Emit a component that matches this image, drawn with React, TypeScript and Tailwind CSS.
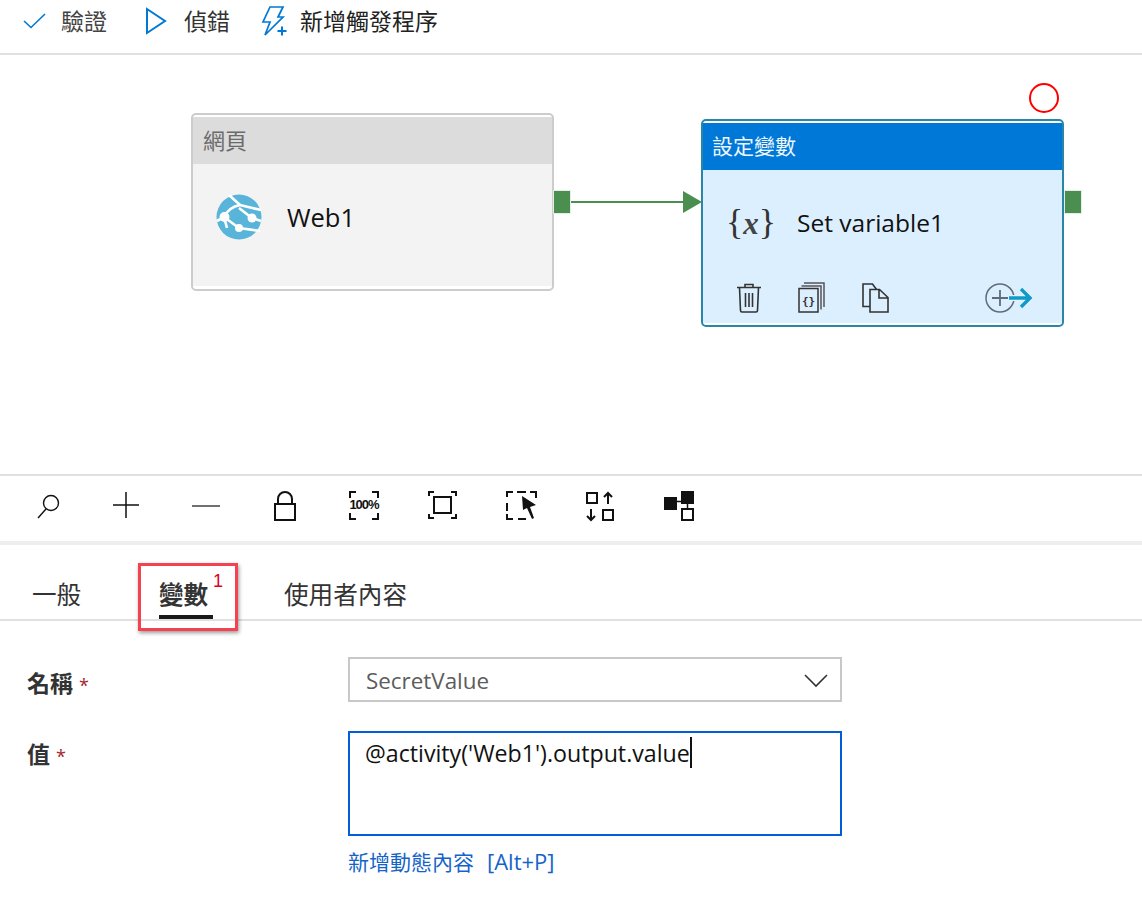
import React from "react";

const FONT = "font-['Open_Sans','Noto_Sans_CJK_TC',sans-serif]";

function Check() {
  return (
    <svg width="24" height="20" viewBox="0 0 24 20" fill="none" stroke="#0078d4" strokeWidth="1.6">
      <path d="M1 10l7 6.5L22 3" />
    </svg>
  );
}
function Play() {
  return (
    <svg width="22" height="28" viewBox="0 0 22 28" fill="none" stroke="#0078d4" strokeWidth="2">
      <path d="M2 2v24l18-12z" />
    </svg>
  );
}
function Trigger() {
  return (
    <svg width="26" height="30" viewBox="0 0 26 30" fill="none" stroke="#0078d4" strokeWidth="1.7">
      <path d="M9 1h13l-5 10h5L4 29l5-13H2z" />
      <path d="M16.5 25h9M21 20.5v9" strokeWidth="2" />
    </svg>
  );
}

function WebIcon() {
  return (
    <svg width="46" height="46" viewBox="0 0 46 46">
      <circle cx="23" cy="23" r="22.5" fill="#59b4d9" />
      <g stroke="#fff" fill="none" strokeWidth="2.6">
        <path d="M8 23Q13 13 24 11L45 16" />
        <path d="M13 1L24 11" />
        <path d="M23 14L36 24L45 27" />
        <path d="M8 23L23 34L44 37" />
        <path d="M8 23L1 27" />
        <path d="M8 23L11 34" />
      </g>
      <circle cx="8.5" cy="23" r="5" fill="#fff" />
      <circle cx="36" cy="24" r="4.5" fill="#fff" />
      <circle cx="23" cy="34" r="4" fill="#fff" />
    </svg>
  );
}

function Trash() {
  return (
    <svg width="24" height="30" viewBox="0 0 24 30" fill="none" stroke="#333" strokeWidth="1.6">
      <path d="M0 4.5h24M8 4.5V1.5h8v3M2.5 4.5l1 23q0 1.5 1.5 1.5h14q1.5 0 1.5-1.5l1-23M8.5 10v14M12 10v14M15.5 10v14" />
    </svg>
  );
}
function CodeCopy() {
  return (
    <svg width="27" height="31" viewBox="0 0 27 31" fill="none" stroke="#333" strokeWidth="1.5">
      <rect x="1" y="6.5" width="19" height="23.5" stroke="#333" />
      <path d="M3.5 4h19.5v23.5M6 1h20v24" stroke="#555" />
      <text x="10.5" y="22.5" fontSize="11" fontWeight="700" fontFamily="'DejaVu Sans Mono',monospace" fill="#333" stroke="none" textAnchor="middle">{"{}"}</text>
    </svg>
  );
}
function CopyDoc() {
  return (
    <svg width="27" height="30" viewBox="0 0 27 30" fill="none" stroke="#333" strokeWidth="1.6">
      <path d="M8 23.5H1V1h9.5l4 5.5" />
      <path d="M8 6.5h9.5l8.5 8V29H8zM17 6.5v8.5h9" />
    </svg>
  );
}
function AddNext() {
  return (
    <svg width="48" height="30" viewBox="0 0 48 30" fill="none">
      <circle cx="16" cy="15" r="14" stroke="#5f6b7a" strokeWidth="1.5" />
      <path d="M16 7v16M8 15h16" stroke="#5f6b7a" strokeWidth="1.8" />
      <path d="M25 15h21M37 6l9 9-9 9" stroke="#e6f1f8" strokeWidth="6" />
      <path d="M25 15h20M37 6l9 9-9 9" stroke="#0f9ac9" strokeWidth="3.4" />
    </svg>
  );
}

function Search() {
  return (
    <svg width="26" height="26" viewBox="0 0 26 26" fill="none" stroke="#111" strokeWidth="1.4">
      <circle cx="15" cy="10" r="7.5" />
      <path d="M10 16L2 25" />
    </svg>
  );
}
function Plus() {
  return (
    <svg width="28" height="28" viewBox="0 0 28 28" stroke="#111" strokeWidth="1.5">
      <path d="M14 1v26M1 14h26" />
    </svg>
  );
}
function Minus() {
  return (
    <svg width="28" height="4" viewBox="0 0 28 4" stroke="#222" strokeWidth="1.3">
      <path d="M0 2h28" />
    </svg>
  );
}
function Lock() {
  return (
    <svg width="24" height="31" viewBox="0 0 24 31" fill="none" stroke="#111" strokeWidth="2">
      <rect x="2" y="14" width="20" height="16" />
      <path d="M5 14V9a7 7 0 0 1 14 0v5" />
    </svg>
  );
}
function Corners() {
  return (
    <svg width="30" height="29" viewBox="0 0 30 29" fill="none" stroke="#111" strokeWidth="2">
      <path d="M1 7V1h6M23 1h6v6M1 22v6h6M23 28h6v-6" />
    </svg>
  );
}
function Fit() {
  return (
    <svg width="29" height="28" viewBox="0 0 29 28" fill="none" stroke="#111" strokeWidth="2">
      <path d="M1 5V1h5M23 1h5v4M1 23v4h5M23 27h5v-4" />
      <rect x="6" y="6" width="17" height="16" />
    </svg>
  );
}
function SelectBox() {
  return (
    <svg width="32" height="31" viewBox="0 0 32 31" fill="none" stroke="#111" strokeWidth="2">
      <path d="M2 7V2h6M12 2h9M25 2h6v6M2 13v8M2 24v5h6M13 29h8" />
      <path d="M17 6L18 20L22 18L27 29L29 28L25 17L31 15z" fill="#111" stroke="none" />
    </svg>
  );
}
function Arrange() {
  return (
    <svg width="30" height="31" viewBox="0 0 30 31" fill="none" stroke="#111" strokeWidth="2">
      <rect x="2" y="2" width="10" height="10" />
      <rect x="18" y="19" width="10" height="10" />
      <path d="M23 13V2M19 6l4-4 4 4M6 18v11M2 25l4 4 4-4" />
    </svg>
  );
}
function Layout() {
  return (
    <svg width="30" height="30" viewBox="0 0 30 30">
      <rect x="0" y="6" width="13" height="13" fill="#111" />
      <rect x="17" y="0" width="13" height="13" fill="#111" />
      <path d="M13 10.5h6M23.5 13v5" stroke="#111" strokeWidth="1.5" />
      <rect x="18" y="18" width="11" height="11" fill="none" stroke="#111" strokeWidth="2" />
    </svg>
  );
}

function Port() {
  return <div className="w-[18px] h-[24px] bg-[#4a8f50] border border-[#e3efe3]" />;
}

export default function App() {
  return (
    <div className={`w-[1142px] h-[912px] bg-white overflow-hidden ${FONT}`}>
      {/* Command bar */}
      <div className="h-[55px] border-b-2 border-[#e0e0e0] flex items-start pt-[5px] pl-[23px] text-[23px] leading-[32px] text-[#333]">
        <div className="flex items-center gap-[14px] w-[122px] h-[32px]">
          <Check />
          <span className="text-[#444]">驗證</span>
        </div>
        <div className="flex items-center gap-[17px] w-[116px] h-[32px]">
          <Play />
          <span>偵錯</span>
        </div>
        <div className="flex items-center gap-[13px] h-[32px]">
          <Trigger />
          <span className="text-[#222] text-[23px]">新增觸發程序</span>
        </div>
      </div>

      {/* Canvas */}
      <div className="relative h-[421px] border-b-2 border-[#e0e0e0]">
        {/* Web node */}
        <div className="absolute left-[191px] top-[58px] w-[363px] h-[178px] border-2 border-[#cccccc] rounded-[5px] bg-white pt-[2px] pb-[3px] flex flex-col">
          <div className="h-[47px] bg-[#dcdcdc] pl-[10px] text-[22px] leading-[47px] text-[#6b6b6b]">網頁</div>
          <div className="flex-1 bg-[#f3f3f3] flex items-start pl-[23px] pt-[30px] gap-[25px]">
            <WebIcon />
            <span className="text-[#111] text-[25.5px] leading-[46px]">Web1</span>
          </div>
        </div>
        <div className="absolute left-[553px] top-[135px]"><Port /></div>

        {/* Connector */}
        <div className="absolute left-[571px] top-[146px] w-[114px] h-[2px] bg-[#4a8f50]" />
        <svg className="absolute left-[683px] top-[136px]" width="19" height="22" viewBox="0 0 19 22">
          <path d="M0 0l19 11L0 22z" fill="#4a8f50" />
        </svg>

        {/* Set variable node */}
        <div className="absolute left-[701px] top-[64px] w-[363px] h-[208px] border-2 border-[#2a86a8] rounded-[5px] bg-white pt-[2px] pb-[2px] flex flex-col">
          <div className="h-[47px] bg-[#0078d7] pl-[9px] text-[21px] leading-[46px] text-[#eef6fd]">設定變數</div>
          <div className="flex-1 bg-[#dcefff] flex flex-col">
            <div className="flex items-center h-[106px] pl-[23px] gap-[23px]">
              <span className="font-['Liberation_Serif',serif] text-[36px] leading-[46px] text-[#333] w-[48px] whitespace-nowrap">{"{"}<em className="font-bold text-[#444] text-[31px]">x</em>{"}"}</span>
              <span className="text-[#111] text-[24.5px] leading-[46px]">Set variable1</span>
            </div>
            <div className="flex items-start pl-[34px] pr-[30px] pt-[7px]">
              <Trash />
              <div className="ml-[37px] -mt-[1px]"><CodeCopy /></div>
              <div className="ml-[37px]"><CopyDoc /></div>
              <div className="ml-auto"><AddNext /></div>
            </div>
          </div>
        </div>
        <div className="absolute left-[1064px] top-[135px]"><Port /></div>

        {/* Annotation */}
        <div className="absolute left-[1029px] top-[28px] w-[30px] h-[30px] rounded-full border-2 border-[#ff0000]" />
      </div>

      {/* Canvas tools */}
      <div className="h-[69px] border-b-4 border-[#eeeeee] relative flex items-center">
        <div className="absolute left-[36px] top-[17px]"><Search /></div>
        <div className="absolute left-[112px] top-[15px]"><Plus /></div>
        <div className="absolute left-[192px] top-[28px]"><Minus /></div>
        <div className="absolute left-[273px] top-[14px]"><Lock /></div>
        <div className="absolute left-[349px] top-[15px]">
          <Corners />
          <span className="absolute left-0 top-[6px] w-[30px] text-center text-[13px] leading-[16px] font-bold text-[#111] font-['Liberation_Sans',sans-serif] tracking-[-1px] whitespace-nowrap">100%</span>
        </div>
        <div className="absolute left-[428px] top-[15px]"><Fit /></div>
        <div className="absolute left-[505px] top-[14px]"><SelectBox /></div>
        <div className="absolute left-[585px] top-[15px]"><Arrange /></div>
        <div className="absolute left-[664px] top-[15px]"><Layout /></div>
      </div>

      {/* Tabs */}
      <div className="h-[76px] border-b-2 border-[#e0e0e0] flex items-start pl-[32px] pt-[32px] text-[24.6px] leading-[36px] text-[#333]">
        <span className="w-[127px]">一般</span>
        <div className="relative w-[125px]">
          <span className="font-bold text-[#333]">變數</span>
          <span className="absolute left-[54px] top-[-5px] text-[18px] leading-[18px] text-[#e00020] font-['Liberation_Sans',sans-serif]">1</span>
          <div className="absolute left-0 top-[38px] w-[54px] h-[4px] bg-[#1a1a1a]" />
        </div>
        <span>使用者內容</span>
      </div>

      {/* Form */}
      <div className="relative">
        <div className="grid grid-cols-[348px_494px] pt-[36px]">
          <div className="pl-[27px] text-[23px] leading-[50px] h-[50px] text-[#333] font-bold mt-[1px]">
            名稱 <span className="text-[#a4262c] font-normal text-[18px]">*</span>
          </div>
          <div className="h-[45px] border-2 border-[#c8c8c8] flex items-center justify-between pl-[16px] pr-[12px] pt-[3px] text-[22.4px] text-[#5c5c5c]">
            <span>SecretValue</span>
            <svg width="24" height="14" viewBox="0 0 24 14" fill="none" stroke="#333" strokeWidth="1.6">
              <path d="M1 1l11 11L23 1" />
            </svg>
          </div>
        </div>
        <div className="grid grid-cols-[348px_494px] pt-[23px]">
          <div className="pl-[27px] text-[23px] leading-[46px] text-[#333] font-bold">
            值 <span className="text-[#a4262c] font-normal text-[18px]">*</span>
          </div>
          <div>
            <div className="h-[105px] border-2 border-[#005fd6] pl-[15px] pt-[4px] flex items-start text-[23.2px] leading-[33px] text-[#111]">
              <span className="border-r-2 border-[#111] whitespace-nowrap h-[31px]">@activity('Web1').output.value</span>
            </div>
            <div className="mt-[10px] text-[21px] leading-[30px] text-[#1464c8] whitespace-nowrap">
              新增動態內容<span className="ml-[13px] text-[22px]">[Alt+P]</span>
            </div>
          </div>
        </div>
      </div>

      {/* Red highlight annotation */}
      <div className="absolute left-[138px] top-[563px] w-[100px] h-[68px] border-[3px] border-[#f44250] shadow-[1px_2px_4px_rgba(0,0,0,0.4)]" />
    </div>
  );
}
